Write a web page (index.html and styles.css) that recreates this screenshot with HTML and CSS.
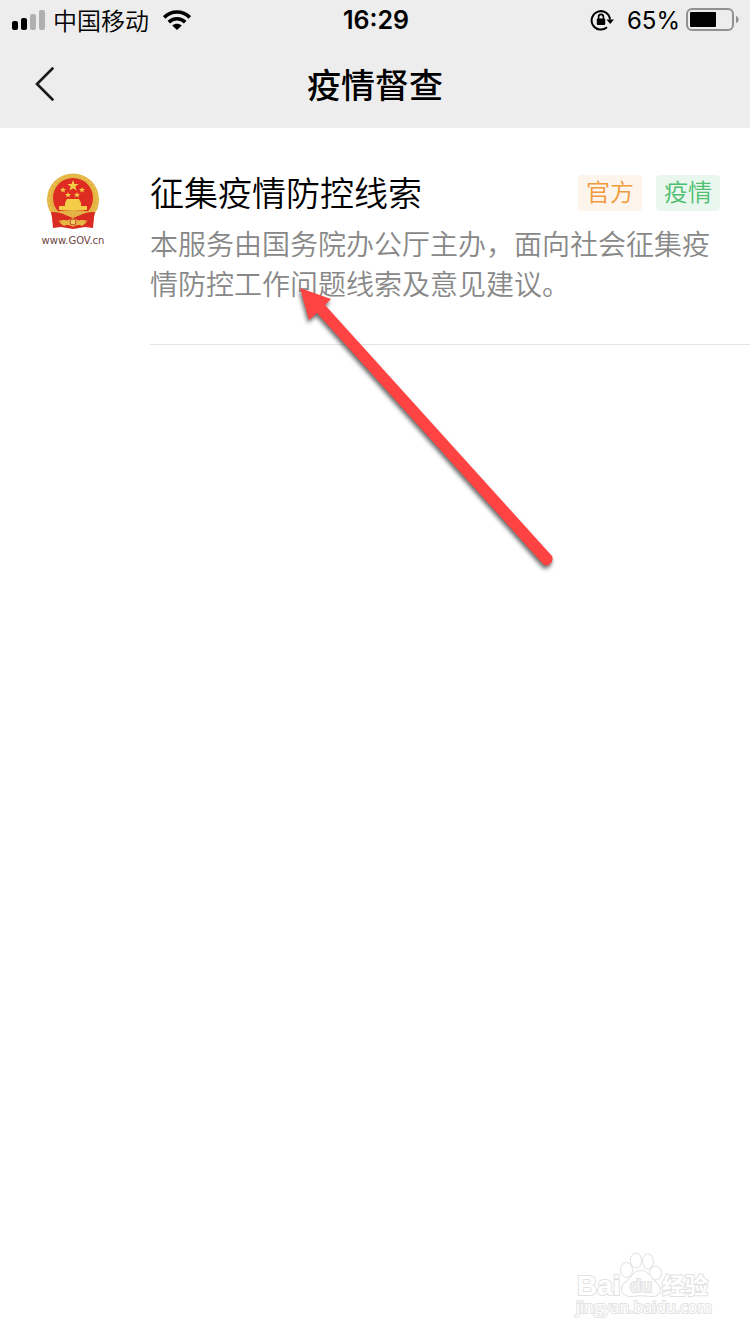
FILE: index.html
```html
<!DOCTYPE html>
<html lang="zh-CN">
<head>
<meta charset="utf-8">
<meta name="viewport" content="width=device-width, initial-scale=1">
<title>疫情督查</title>
<link rel="stylesheet" href="styles.css">
</head>
<body>
<div class="screen">
  <header class="header">
    <div class="status">
      <div class="status-left">
        <svg class="signal" width="34" height="20" viewBox="0 0 34 20" aria-hidden="true">
          <rect x="0" y="11" width="6" height="9" rx="2"/>
          <rect x="9" y="8" width="6" height="12" rx="2"/>
          <rect x="18" y="4" width="6" height="16" rx="2" fill="#b0b0b0"/>
          <rect x="27" y="0" width="6" height="20" rx="2" fill="#b0b0b0"/>
        </svg>
        <span class="carrier">中国移动</span>
        <svg class="wifi" width="28" height="20" viewBox="0 0 28 20" aria-hidden="true">
          <g fill="none" stroke="#000" stroke-width="3.6">
            <path d="M1.2 7.4C8.4.2 19.6.2 26.8 7.4"/>
            <path d="M5.8 12.1C10.4 7.6 17.6 7.6 22.2 12.1"/>
          </g>
          <path d="M14 20L9.2 15.5C12 13.2 16 13.2 18.8 15.5Z"/>
        </svg>
      </div>
      <time class="clock">16:29</time>
      <div class="status-right">
        <svg width="24" height="22" viewBox="0 0 24 22" aria-hidden="true">
          <path d="M17 18.200A9.200 9.200 0 1 1 20 10.5" fill="none" stroke="#000" stroke-width="2"/>
          <path d="M16.500 10.5H24L20.200 15Z"/>
          <rect x="6.800" y="9.500" width="8.400" height="6.400" rx="1"/>
          <path d="M8.600 10V7.800A2.400 2.400 0 0 1 13.400 7.800V10" fill="none" stroke="#000" stroke-width="1.6"/>
        </svg>
        <span class="percent">65%</span>
        <svg class="battery" width="54" height="24" viewBox="0 0 54 24" aria-hidden="true">
          <rect x="1" y="1" width="46" height="21" rx="5" fill="none" stroke="#919191" stroke-width="2"/>
          <rect x="4" y="4" width="26" height="15" rx="1"/>
          <path d="M50 8C53.6 9 53.6 14 50 15Z" fill="#919191"/>
        </svg>
      </div>
    </div>
    <nav class="nav">
      <button class="back" type="button" aria-label="返回">
        <svg width="20" height="34" viewBox="0 0 20 34" aria-hidden="true">
          <path d="M17.5 1.5L2 17L17.5 32.5" fill="none" stroke="#1a1a1a" stroke-width="2.6" stroke-linecap="round"/>
        </svg>
      </button>
      <h1 class="nav-title">疫情督查</h1>
    </nav>
  </header>

  <main class="list">
    <article class="item">
      <div class="logo">
        <svg width="56" height="58" viewBox="0 0 56 58" aria-hidden="true">
          <path d="M6.500 37H49.500L48 55L40 54L28 56L16 54L8 55Z" fill="#d92b22"/>
          <circle cx="28" cy="26.5" r="26" fill="#e3b443"/>
          <circle cx="28" cy="26.5" r="24" fill="none" stroke="#e9c04e" stroke-width="2" stroke-dasharray="3 2"/>
          <circle cx="28" cy="25" r="20" fill="#df2c22"/>
          <g fill="#f4cd48">
            <path d="M28 7L29.400 11L33.600 11.100L30.300 13.600L31.500 17.600L28 15.200L24.500 17.600L25.700 13.600L22.400 11.100L26.600 11Z"/>
            <path id="star" d="M18 14L18.800 16L21 16.100L19.300 17.400L19.900 19.500L18 18.300L16.100 19.500L16.700 17.400L15 16.100L17.200 16Z"/>
            <use href="#star" x="5" y="5"/>
            <use href="#star" x="14" y="5"/>
            <use href="#star" x="19"/>
            <path d="M22 26H34L36 30H20Z"/>
            <path d="M20 30H36V33H42V37H14V33H20Z"/>
          </g>
          <path d="M9 39Q28 35 47 39L44 43Q36 41 28 45Q20 41 12 43Z" fill="#e3b443"/>
          <path d="M6 39Q16 38 28 46Q40 38 50 39L48 50Q36 44 28 50Q20 44 8 50Z" fill="#d92b22"/>
          <path d="M15 50Q17 45 22 48Q28 43 34 48Q39 45 41 50L37 53Q33 50 28 54Q23 50 19 53Z" fill="#e6b645"/>
          <circle cx="28" cy="49" r="3" fill="#f1cf62" stroke="#c5432a"/>
        </svg>
        <span class="logo-text">www.GOV.cn</span>
      </div>
      <div class="item-body">
        <div class="item-head">
          <h2 class="item-title">征集疫情防控线索</h2>
          <span class="tag tag-official">官方</span>
          <span class="tag tag-epidemic">疫情</span>
        </div>
        <p class="item-desc">本服务由国务院办公厅主办，面向社会征集疫情防控工作问题线索及意见建议。</p>
      </div>
    </article>
    <svg class="arrow" width="270" height="300" viewBox="0 0 270 300" aria-hidden="true">
      <path d="M10 8L41 19L35 25L262 276Q264 281 260 284Q256 287 253 284L27 33L19 40Z" fill="#ff4343"/>
    </svg>
  </main>

  <footer class="watermark">
    <svg width="140" height="68" viewBox="0 0 140 68" role="img" aria-label="Baidu 经验">
      <g class="mark">
        <text class="mark-latin" x="4" y="43">Bai</text>
        <ellipse cx="53.500" cy="18" rx="5.500" ry="7"/>
        <ellipse cx="63" cy="8.500" rx="5" ry="7"/>
        <ellipse cx="75" cy="9.500" rx="5" ry="7"/>
        <ellipse cx="82.500" cy="21" rx="5.500" ry="6.500"/>
        <path d="M68 19C76 19 78 27 83 31C91 38 86 45 77 44C71 43 65 43 60 44C51 45 45 38 52 31C58 27 60 19 68 19Z"/>
        <text class="mark-du" x="57" y="40">du</text>
        <text class="mark-cjk" x="89" y="42">经验</text>
        <text class="mark-url" x="3" y="61">jingyan.baidu.com</text>
      </g>
    </svg>
  </footer>
</div>
</body>
</html>
```
FILE: styles.css
```css
* {
  box-sizing: border-box;
}

body {
  margin: 0;
  background: #fff;
  color: #000;
  font-family: Inter, "Noto Sans CJK SC", sans-serif;
}

.screen {
  display: flex;
  flex-direction: column;
  min-height: 100vh;
}

.header {
  background: #ededed;
}

.status {
  display: grid;
  grid-template-columns: 1fr auto 1fr;
  align-items: center;
  height: 40px;
  padding: 0 10px 0 12px;
}

.status-left,
.status-right {
  display: flex;
  align-items: center;
}

.status-right {
  justify-content: flex-end;
}

.carrier {
  margin: 0 14px 0 7px;
  font-family: "Noto Sans CJK SC", sans-serif;
  font-size: 24px;
  line-height: 40px;
  font-weight: 350;
}

.clock {
  font-size: 25px;
  font-weight: 600;
}

.percent {
  margin: 0 6px 0 13px;
  font-size: 24px;
}

.nav {
  display: grid;
  grid-template-columns: 88px 1fr 88px;
  align-items: center;
  height: 88px;
}

.back {
  display: flex;
  align-items: center;
  height: 88px;
  padding: 0 0 0 35px;
  border: 0;
  background: none;
}

.nav-title {
  margin: 0;
  padding-top: 4px;
  font-size: 34px;
  line-height: 48px;
  font-weight: 500;
  text-align: center;
}

.list {
  position: relative;
}

.item {
  display: grid;
  grid-template-columns: 150px 1fr;
}

.logo {
  display: flex;
  flex-direction: column;
  align-items: center;
  padding: 45px 4px 0 0;
}

.logo-text {
  margin-top: 4px;
  font-family: "DejaVu Sans", sans-serif;
  font-size: 10px;
  line-height: 12px;
  color: #6e4444;
}

.item-body {
  padding: 43px 30px 39px 0;
  border-bottom: 1px solid #e5e5e5;
}

.item-head {
  display: flex;
  align-items: center;
  gap: 14px;
  margin-bottom: 10px;
}

.item-title {
  flex: 1;
  margin: 0;
  padding-top: 2px;
  font-size: 34px;
  line-height: 42px;
  font-weight: 350;
}

.tag {
  padding: 0 8px;
  border-radius: 4px;
  font-size: 24px;
  line-height: 36px;
  font-weight: 350;
}

.tag-official {
  background: #fdf5eb;
  color: #f09a3e;
}

.tag-epidemic {
  background: #e9f7ef;
  color: #4fc070;
}

.item-desc {
  margin: 0;
  font-size: 28px;
  line-height: 40px;
  font-weight: 350;
  color: #888;
}

.arrow {
  position: absolute;
  top: 152px;
  left: 290px;
  filter: drop-shadow(-1px 3px 2px rgba(0, 0, 0, 0.6));
  pointer-events: none;
}

.watermark {
  display: flex;
  justify-content: flex-end;
  margin-top: auto;
  padding: 0 37px 14px 0;
}

.mark {
  fill: #fff;
  stroke: #e2e2e2;
  stroke-width: 2px;
  paint-order: stroke;
}

.mark-latin {
  font: 700 28px "Liberation Sans", sans-serif;
}

.mark-du {
  fill: #f2f2f2;
  font: 700 18px "Liberation Sans", sans-serif;
}

.mark-cjk {
  font: 700 23px "Noto Sans CJK SC", sans-serif;
}

.mark-url {
  font: 400 16px "Open Sans", sans-serif;
}
```
